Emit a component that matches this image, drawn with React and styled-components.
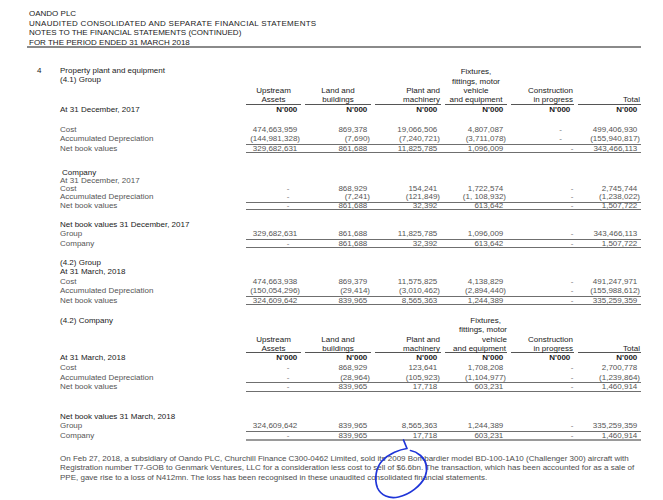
import React from 'react';
import styled, { createGlobalStyle } from 'styled-components';

const Global = createGlobalStyle`
  html, body { margin: 0; padding: 0; background: #fff; }
  body {
    font-family: "Liberation Sans", Arial, Helvetica, sans-serif;
    font-size: 8px;
    color: #1a1a1a;
  }
`;

const Sheet = styled.div`
  position: relative;
  width: 663px;
  height: 500px;
  overflow: hidden;
  box-sizing: border-box;
  padding: 9px 0 0 27px;
`;

const DocHeader = styled.header`
  width: 612px;
  height: 36.5px;
  padding-left: 2px;
  border-bottom: 2px solid #8a8a8a;
  line-height: 9.7px;
  color: #1a1a1a;
  white-space: nowrap;
`;

const DocLine = styled.div`
  letter-spacing: ${(p) => p.$ls || 0}px;
`;

const Section = styled.section`
  margin-top: ${(p) => p.$mt || 0}px;
  line-height: ${(p) => p.$lh || 9.5}px;
`;

const Row = styled.div`
  display: grid;
  grid-template-columns: 29px 182px 395px;
  column-gap: 4px;
  width: 614px;
  white-space: nowrap;
  ${(p) => (p.$h ? `height: ${p.$h}px;` : '')}
`;

const Gutter = styled.div`
  padding-left: 10px;
  line-height: 9.6px;
  color: #1a1a1a;
`;

const TitleBlock = styled.div`
  align-self: start;
  line-height: 9.6px;
  color: #1a1a1a;
`;

const Label = styled.div`
  color: ${(p) => (p.$tone === 'dark' ? '#1a1a1a' : '#555')};
  padding-left: ${(p) => p.$indent || 0}px;
`;

const Values = styled.div`
  display: grid;
  grid-template-columns: 55px 66px 66px 62px 63px 63px;
  column-gap: 4px;
  box-shadow: ${(p) => {
    const s = [];
    if (p.$top) s.push('inset 0 1px 0 #6f6f6f');
    if (p.$bottom === 'thick') s.push('inset 0 -2px 0 #9a9a9a');
    else if (p.$bottom) s.push('inset 0 -1px 0 #6f6f6f');
    return s.length ? s.join(', ') : 'none';
  }};
`;

const ColHead = styled.div`
  display: flex;
  flex-direction: column;
  justify-content: flex-end;
  align-items: ${(p) => (p.$align === 'right' ? 'flex-end' : p.$align === 'left' ? 'flex-start' : 'center')};
  line-height: 9.3px;
  color: #1a1a1a;
  box-shadow: inset 0 -1px 0 #555;
`;

const HeadLine = styled.span`
  padding-right: ${(p) => p.$pr || 0}px;
`;

const Unit = styled.span`
  text-align: right;
  padding-right: 3.7px;
  font-weight: 700;
  color: #1a1a1a;
`;

const Val = styled.span`
  text-align: right;
  padding-right: ${(p) => p.$pad}px;
  color: ${(p) => (p.$dash ? '#777' : '#555')};
`;

const Para = styled.p`
  margin: 13px 0 0 33px;
  line-height: 9.5px;
  color: #4d4d4d;
  white-space: nowrap;
`;

const ParaLine = styled.span`
  display: block;
`;

const Scribble = styled.svg`
  position: absolute;
  left: 370px;
  top: 436px;
  width: 64px;
  height: 64px;
  overflow: visible;
  pointer-events: none;
`;

const NUM_PAD = 3.7;
const DEFAULT_DASH = [11.5, 11.5, 11.5, 11.5, 0.7, 11.5];

function Cell({ v, dashPad }) {
  if (v === '-') return <Val $dash $pad={dashPad}>-</Val>;
  const neg = v.startsWith('(');
  return <Val $pad={neg ? 1 : NUM_PAD}>{v}</Val>;
}

function DataRow({ label, tone, indent, vals, top, bottom, dash }) {
  const pads = dash || DEFAULT_DASH;
  return (
    <Row>
      <span />
      <Label $tone={tone} $indent={indent}>{label}</Label>
      <Values $top={top} $bottom={bottom}>
        {vals ? vals.map((v, i) => <Cell key={i} v={v} dashPad={pads[i]} />) : null}
      </Values>
    </Row>
  );
}

function HeadBlock({ h, num, title, cols }) {
  return (
    <Row $h={h}>
      <Gutter>{num}</Gutter>
      <TitleBlock>
        {title.map((t) => (
          <div key={t}>{t}</div>
        ))}
      </TitleBlock>
      <Values>
        {cols.map((c, i) => (
          <ColHead key={i} $align={c.align}>
            {c.lines.map((l, j) => (
              <HeadLine key={j} $pr={typeof l === 'string' ? (c.align === 'right' ? 1 : 0) : l.pr}>
                {typeof l === 'string' ? l : l.t}
              </HeadLine>
            ))}
          </ColHead>
        ))}
      </Values>
    </Row>
  );
}

function UnitRow({ label }) {
  return (
    <Row>
      <span />
      <Label $tone="dark">{label}</Label>
      <Values>
        {Array.from({ length: 6 }).map((_, i) => (
          <Unit key={i}>N'000</Unit>
        ))}
      </Values>
    </Row>
  );
}

const HEAD_1 = [
  { lines: ['Upstream', 'Assets'], align: 'center' },
  { lines: ['Land and', 'buildings'], align: 'center' },
  { lines: ['Plant and', 'machinery'], align: 'right' },
  { lines: ['Fixtures,', 'fittings, motor', 'vehicle', 'and equipment'], align: 'center' },
  { lines: ['Construction', 'in progress'], align: 'right' },
  { lines: ['Total'], align: 'right' },
];

const HEAD_2 = [
  { lines: ['Upstream', 'Assets'], align: 'center' },
  { lines: ['Land and', 'buildings'], align: 'center' },
  { lines: ['Plant and', 'machinery'], align: 'right' },
  {
    lines: [{ t: 'Fixtures,', pr: 6 }, { t: 'fittings, motor', pr: 0 }, { t: 'vehicle', pr: 0 }, { t: 'and equipment', pr: 1 }],
    align: 'right',
  },
  { lines: ['Construction', 'in progress'], align: 'right' },
  { lines: ['Total'], align: 'right' },
];

const EARLY_DASH = [11.5, 11.5, 11.5, 11.5, 12, 11.5];

export default function App() {
  return (
    <>
      <Global />
      <Sheet>
        <DocHeader>
          <DocLine>OANDO PLC</DocLine>
          <DocLine $ls={0.27}>UNAUDITED CONSOLIDATED AND SEPARATE FINANCIAL STATEMENTS</DocLine>
          <DocLine>NOTES TO THE FINANCIAL STATEMENTS (CONTINUED)</DocLine>
          <DocLine>FOR THE PERIOD ENDED 31 MARCH 2018</DocLine>
        </DocHeader>

        <Section $mt={18.4}>
          <HeadBlock h={38.75} num="4" title={['Property plant and equipment', '(4.1)  Group']} cols={HEAD_1} />
        </Section>
        <Section $mt={0.55} $lh={9.6}>
          <UnitRow label="At 31 December, 2017" />
        </Section>

        <Section $mt={9.75} $lh={9.5}>
          <DataRow
            label="Cost"
            vals={['474,663,959', '869,378', '19,066,506', '4,807,087', '-', '499,406,930']}
            dash={EARLY_DASH}
          />
          <DataRow
            label="Accumulated Depreciation"
            vals={['(144,981,328)', '(7,690)', '(7,240,721)', '(3,711,078)', '-', '(155,940,817)']}
            dash={EARLY_DASH}
          />
          <DataRow
            label="Net book values"
            vals={['329,682,631', '861,688', '11,825,785', '1,096,009', '-', '343,466,113']}
            top
            bottom
          />
        </Section>

        <Section $mt={15.5} $lh={8.3}>
          <DataRow label=" Company" tone="dark" indent={2} />
          <DataRow label="At 31 December, 2017" />
          <DataRow label="Cost" vals={['-', '868,929', '154,241', '1,722,574', '-', '2,745,744']} />
          <DataRow
            label="Accumulated Depreciation"
            vals={['-', '(7,241)', '(121,849)', '(1, 108,932)', '-', '(1,238,022)']}
          />
          <DataRow
            label="Net book values"
            vals={['-', '861,688', '32,392', '613,642', '-', '1,507,722']}
            top
            bottom
          />
        </Section>

        <Section $mt={9.5} $lh={9.5}>
          <DataRow label="Net book values 31 December, 2017" tone="dark" />
          <DataRow label="Group" vals={['329,682,631', '861,688', '11,825,785', '1,096,009', '-', '343,466,113']} />
          <DataRow
            label="Company"
            vals={['-', '861,688', '32,392', '613,642', '-', '1,507,722']}
            top
            bottom
          />
        </Section>

        <Section $mt={9.5} $lh={9.5}>
          <DataRow label="(4.2) Group" tone="dark" />
          <DataRow label="At 31 March, 2018" tone="dark" />
          <DataRow
            label="Cost"
            vals={['474,663,938', '869,379', '11,575,825', '4,138,829', '-', '491,247,971']}
          />
          <DataRow
            label="Accumulated Depreciation"
            vals={['(150,054,296)', '(29,414)', '(3,010,462)', '(2,894,440)', '-', '(155,988,612)']}
          />
          <DataRow
            label="Net book values"
            vals={['324,609,642', '839,965', '8,565,363', '1,244,389', '-', '335,259,359']}
            top
            bottom
          />
        </Section>

        <Section $mt={10.75}>
          <HeadBlock h={37.5} num="" title={['(4.2) Company']} cols={HEAD_2} />
        </Section>
        <Section $mt={0.2} $lh={9.6}>
          <UnitRow label="At 31 March, 2018" />
          <DataRow label="Cost" vals={['-', '868,929', '123,641', '1,708,208', '-', '2,700,778']} />
          <DataRow
            label="Accumulated Depreciation"
            vals={['-', '(28,964)', '(105,923)', '(1,104,977)', '-', '(1,239,864)']}
          />
          <DataRow
            label="Net book values"
            vals={['-', '839,965', '17,718', '603,231', '-', '1,460,914']}
            top
            bottom
          />
        </Section>

        <Section $mt={20} $lh={9.6}>
          <DataRow label="Net book values 31 March, 2018" tone="dark" />
          <DataRow label="Group" vals={['324,609,642', '839,965', '8,565,363', '1,244,389', '-', '335,259,359']} />
          <DataRow
            label="Company"
            vals={['-', '839,965', '17,718', '603,231', '-', '1,460,914']}
            top
            bottom="thick"
          />
        </Section>

        <Para>
          <ParaLine>
            On Feb 27, 2018, a subsidiary of Oando PLC, Churchill Finance C300-0462 Limited, sold its 2009 Bombardier model BD-100-1A10 (Challenger 300) aircraft with
          </ParaLine>
          <ParaLine>
            Registration number T7-GOB to Genmark Ventures, LLC for a consideration less cost to sell of $6.6bn. The transaction, which has been accounted for as a sale of
          </ParaLine>
          <ParaLine>
            PPE, gave rise to a loss of N412mn. The loss has been recognised in these unaudited consolidated financial statements.
          </ParaLine>
        </Para>

        <Scribble viewBox="0 0 64 64">
          <path
            d="M33.5 4 L37 12.5 C30 13.5 19 17.5 12 25 C6 31.5 4 43 7.5 52 C11 59.5 19 63 28.5 61 C40 58.5 50.5 50 55 41 C58 33 56.5 25 50.5 19.5 C47 16.5 43.5 15 40.5 14.5"
            fill="none"
            stroke="#1f35d8"
            strokeWidth="1.7"
            strokeLinecap="round"
            strokeLinejoin="round"
          />
        </Scribble>
      </Sheet>
    </>
  );
}
